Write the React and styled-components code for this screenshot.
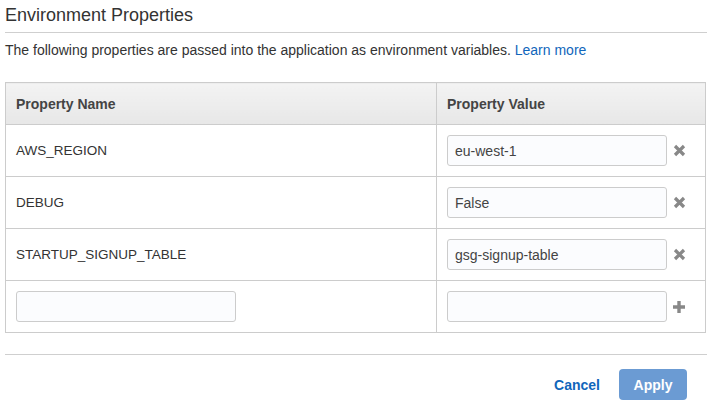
import styled, { createGlobalStyle } from 'styled-components';

const GlobalStyle = createGlobalStyle`
  body {
    margin: 0;
    background: #fff;
    font-family: "Liberation Sans", Arial, Helvetica, sans-serif;
    color: #333;
  }
`;

const rows = [
  { name: 'AWS_REGION', value: 'eu-west-1' },
  { name: 'DEBUG', value: 'False' },
  { name: 'STARTUP_SIGNUP_TABLE', value: 'gsg-signup-table' },
];

function RemoveIcon() {
  return (
    <svg width="13" height="13" viewBox="0 0 13 13">
      <path d="M2 2 L11 11 M11 2 L2 11" stroke="#888" strokeWidth="3.2" strokeLinecap="butt" />
    </svg>
  );
}

function AddIcon() {
  return (
    <svg width="14" height="14" viewBox="0 0 14 14">
      <path d="M7 1 V13 M1 7 H13" stroke="#888" strokeWidth="3.4" />
    </svg>
  );
}

export default function App() {
  return (
    <>
      <GlobalStyle />
      <Page>
        <Title>Environment Properties</Title>
        <Intro>
          The following properties are passed into the application as environment variables.{' '}
          <Link href="#">Learn more</Link>
        </Intro>

        <Table>
          <thead>
            <tr>
              <Th $name>Property Name</Th>
              <Th>Property Value</Th>
            </tr>
          </thead>
          <tbody>
            {rows.map((r) => (
              <tr key={r.name}>
                <Td>{r.name}</Td>
                <Td>
                  <ValueCell>
                    <Field defaultValue={r.value} />
                    <IconButton aria-label="Remove">
                      <RemoveIcon />
                    </IconButton>
                  </ValueCell>
                </Td>
              </tr>
            ))}
            <tr>
              <Td>
                <Field />
              </Td>
              <Td>
                <ValueCell>
                  <Field />
                  <IconButton aria-label="Add">
                    <AddIcon />
                  </IconButton>
                </ValueCell>
              </Td>
            </tr>
          </tbody>
        </Table>

        <Footer>
          <CancelLink href="#">Cancel</CancelLink>
          <ApplyButton>Apply</ApplyButton>
        </Footer>
      </Page>
    </>
  );
}

const Page = styled.div`
  padding: 0 6px 0 5px;
  width: 702px;
`;

const Title = styled.h2`
  margin: 0;
  padding: 6px 0 8px 0;
  font-size: 18px;
  font-weight: normal;
  line-height: 18px;
  color: #333;
  border-bottom: 1px solid #cfcfcf;
`;

const Intro = styled.p`
  margin: 0;
  padding-top: 9px;
  font-size: 14px;
  line-height: 16px;
  color: #333;
`;

const Link = styled.a`
  color: #1166bb;
  text-decoration: none;
`;

const Table = styled.table`
  margin-top: 24px;
  width: 701px;
  border-collapse: collapse;
  border: 1px solid #cccccc;
  font-size: 13.5px;
`;

const Th = styled.th`
  width: ${(p) => (p.$name ? '410px' : 'auto')};
  height: 41px;
  padding: 0 10px;
  text-align: left;
  font-size: 14px;
  font-weight: bold;
  color: #444;
  background: linear-gradient(#f3f3f3, #e7e7e7);
  border: 1px solid #cccccc;
`;

const Td = styled.td`
  height: 51px;
  padding: 0 10px;
  color: #333;
  border: 1px solid #cccccc;
`;

const ValueCell = styled.div`
  display: flex;
  align-items: center;
  gap: 5px;
`;

const Field = styled.input`
  box-sizing: border-box;
  width: 220px;
  height: 31px;
  padding: 0 7px;
  border: 1px solid #cccccc;
  border-radius: 3px;
  background: #fbfcfe;
  font-family: "Liberation Sans", Arial, Helvetica, sans-serif;
  font-size: 14px;
  color: #444;
  outline: none;
`;

const IconButton = styled.button`
  display: flex;
  align-items: center;
  justify-content: center;
  width: 14px;
  height: 14px;
  padding: 0;
  border: none;
  background: none;
  cursor: pointer;
`;

const Footer = styled.div`
  margin-top: 21px;
  padding-top: 14px;
  padding-right: 20px;
  border-top: 1px solid #cfcfcf;
  display: flex;
  justify-content: flex-end;
  align-items: center;
  gap: 19px;
`;

const CancelLink = styled.a`
  font-size: 14px;
  font-weight: bold;
  color: #1166bb;
  text-decoration: none;
`;

const ApplyButton = styled.button`
  width: 68px;
  height: 31px;
  border: none;
  border-radius: 4px;
  background: #6b9bd3;
  color: #fff;
  font-family: "Liberation Sans", Arial, Helvetica, sans-serif;
  font-size: 14px;
  font-weight: bold;
`;
